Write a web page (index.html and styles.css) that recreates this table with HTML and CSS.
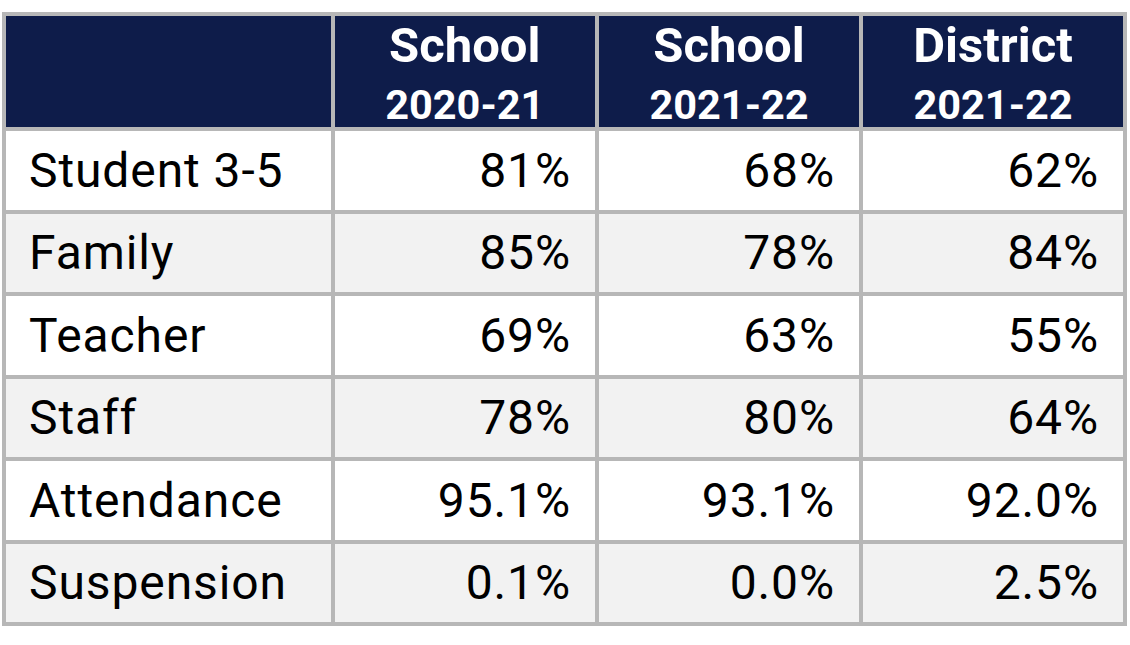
FILE: index.html
```html
<!DOCTYPE html>
<html lang="en">
<head>
<meta charset="utf-8">
<title>School Climate</title>
<link rel="stylesheet" href="styles.css">
</head>
<body>
<div class="table">
  <div class="th"></div>
  <div class="th"><span class="t1">School</span><span class="t2">2020-21</span></div>
  <div class="th"><span class="t1">School</span><span class="t2">2021-22</span></div>
  <div class="th"><span class="t1">District</span><span class="t2">2021-22</span></div>

  <div class="td label">Student 3-5</div>
  <div class="td num">81%</div>
  <div class="td num">68%</div>
  <div class="td num">62%</div>

  <div class="td label alt">Family</div>
  <div class="td num alt">85%</div>
  <div class="td num alt">78%</div>
  <div class="td num alt">84%</div>

  <div class="td label">Teacher</div>
  <div class="td num">69%</div>
  <div class="td num">63%</div>
  <div class="td num">55%</div>

  <div class="td label alt">Staff</div>
  <div class="td num alt">78%</div>
  <div class="td num alt">80%</div>
  <div class="td num alt">64%</div>

  <div class="td label">Attendance</div>
  <div class="td num">95.1%</div>
  <div class="td num">93.1%</div>
  <div class="td num">92.0%</div>

  <div class="td label alt">Suspension</div>
  <div class="td num alt">0.1%</div>
  <div class="td num alt">0.0%</div>
  <div class="td num alt">2.5%</div>
</div>
</body>
</html>
```
FILE: styles.css
```css
html, body {
  margin: 0;
  background: #ffffff;
}
body {
  padding: 12px 0 0 2px;
  font-family: Roboto, "Liberation Sans", sans-serif;
}
.table {
  display: grid;
  width: 1117px;
  grid-template-columns: 324.5px 260.5px 260px 260px;
  grid-template-rows: 111px repeat(6, 78.5px);
  gap: 4px;
  padding: 4px;
  background: #b7b7b7;
}
.th {
  background: #0e1c4a;
  color: #ffffff;
  font-weight: 700;
  display: flex;
  flex-direction: column;
  align-items: center;
  justify-content: flex-start;
  padding-top: 5px;
}
.t1 {
  font-size: 49px;
  line-height: 50px;
}
.t2 {
  font-size: 41.5px;
  line-height: 44px;
  margin-top: 11.8px;
}
.td {
  background: #ffffff;
  color: #000000;
  font-size: 48px;
  letter-spacing: 0.9px;
  display: flex;
  align-items: center;
  padding: 0 24px;
}
.td.alt {
  background: #f2f2f2;
}
.label {
  padding-left: 23px;
}
.num {
  justify-content: flex-end;
}
```
